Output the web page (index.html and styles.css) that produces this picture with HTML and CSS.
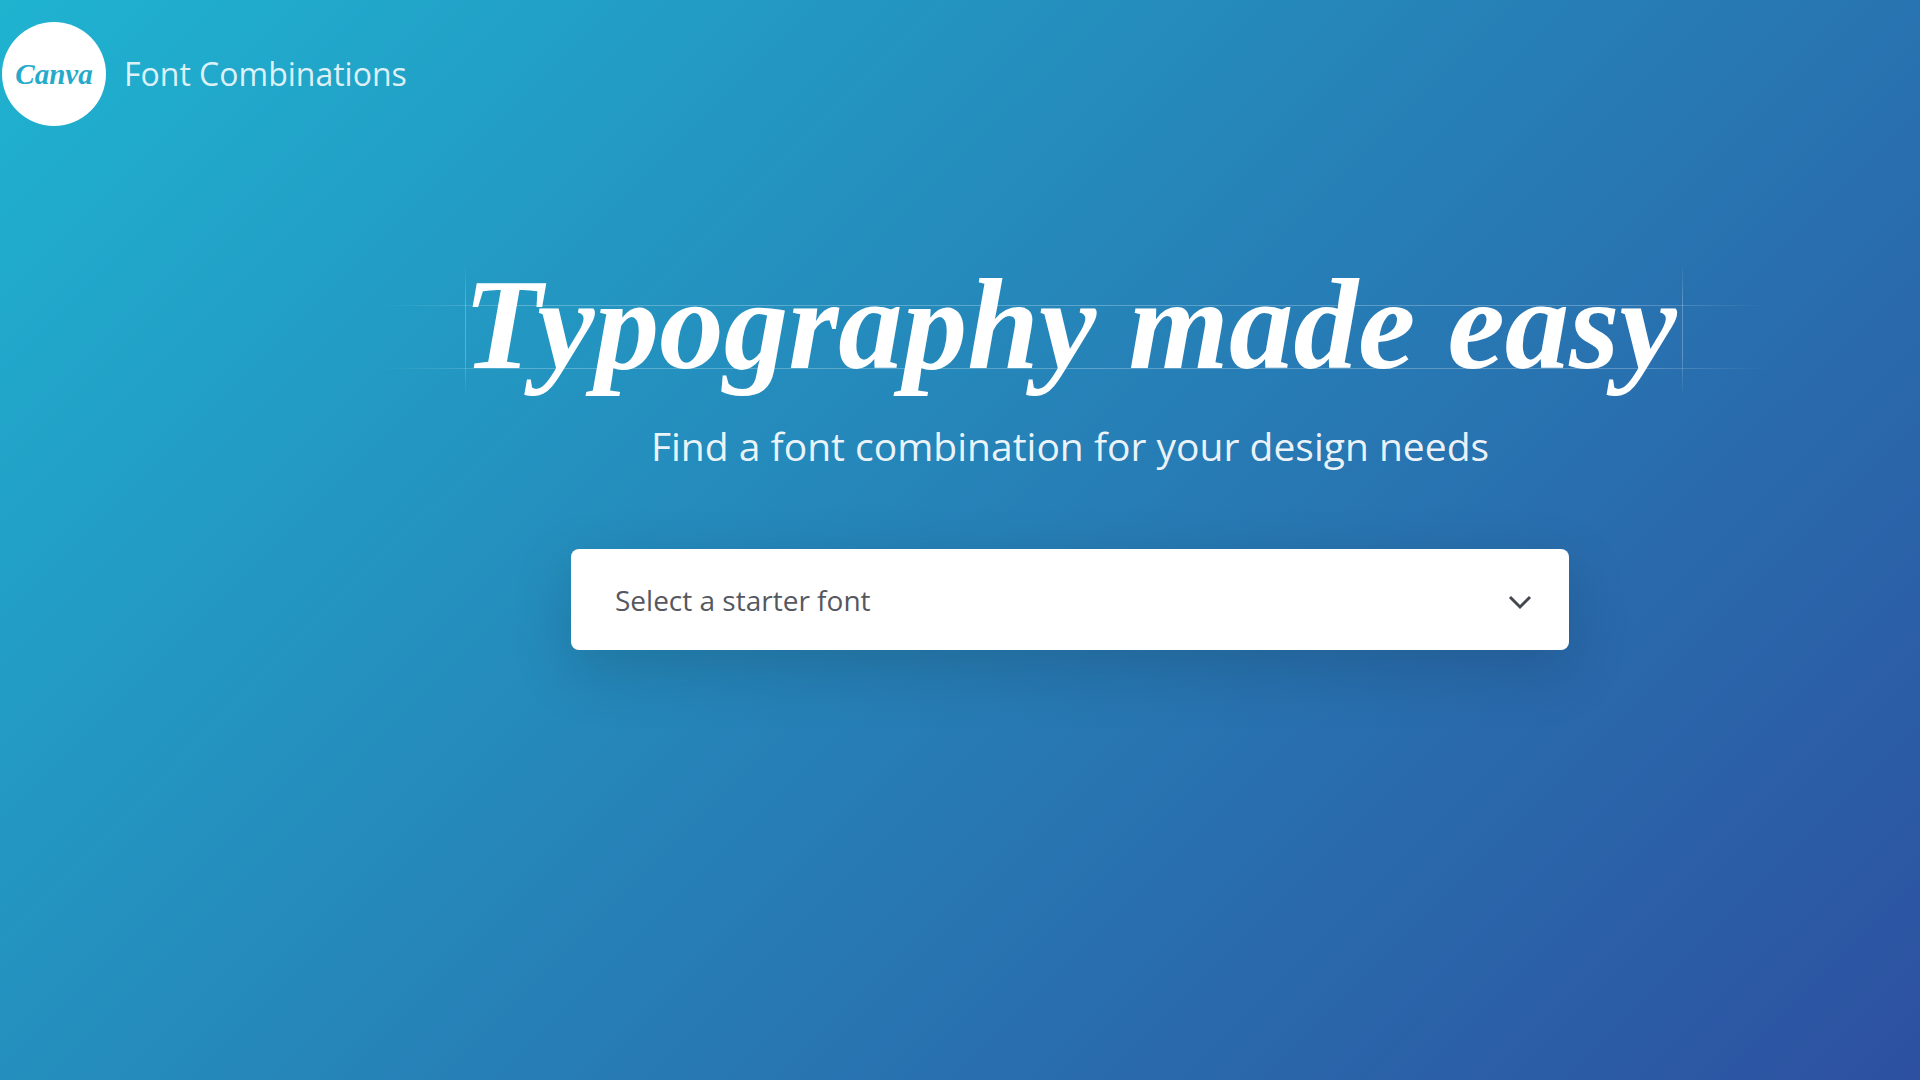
FILE: index.html
```html
<!DOCTYPE html>
<html lang="en">
<head>
<meta charset="utf-8">
<meta name="viewport" content="width=device-width, initial-scale=1">
<title>Font Combinations</title>
<link rel="stylesheet" href="styles.css">
</head>
<body>
<header class="header">
  <a class="logo" href="#">Canva</a>
  <a class="product" href="#">Font Combinations</a>
</header>
<main class="hero">
  <h1 class="title">
    <span class="guide guide-x"></span>
    <span class="guide guide-y"></span>
    Typography made easy
  </h1>
  <label class="subtitle" for="font">Find a font combination for your design needs</label>
  <div class="picker">
    <select class="picker-select" id="font">
      <option>Select a starter font</option>
    </select>
    <svg class="picker-arrow" viewBox="0 0 24 24" aria-hidden="true"><path d="M2 9L12 19L22 9"/></svg>
  </div>
</main>
</body>
</html>
```
FILE: styles.css
```css
* {
  box-sizing: border-box;
}

body {
  margin: 0;
  min-height: 100vh;
  background: linear-gradient(135deg, #1fb3d0 0%, #2681b7 50%, #2d50a0 100%);
  color: #fff;
  font-family: "Open Sans", "Noto Sans", sans-serif;
}

.header {
  display: flex;
  align-items: center;
  gap: 18px;
  padding: 22px 2px 0;
}

.logo {
  display: flex;
  align-items: center;
  justify-content: center;
  width: 104px;
  height: 104px;
  border-radius: 50%;
  background: #fff;
  color: #25aacb;
  font: italic bold 29px/40px "Liberation Serif", serif;
  text-decoration: none;
}

.product {
  color: rgba(255, 255, 255, 0.85);
  font-size: 32px;
  line-height: 44px;
  text-decoration: none;
}

.hero {
  display: flex;
  flex-direction: column;
  align-items: center;
  padding: 138px 0 80px 220px;
}

.title {
  position: relative;
  margin: 0;
  padding: 0 6px 10px;
  font: italic bold 129px/121px "Liberation Serif", serif;
  white-space: nowrap;
}

.guide {
  position: absolute;
  pointer-events: none;
}

.guide-x {
  top: 41px;
  left: -76px;
  right: -84px;
  height: 64px;
  border: solid;
  border-width: 1px 0;
  border-image: linear-gradient(90deg, transparent, rgba(255, 255, 255, 0.25) 10%, rgba(255, 255, 255, 0.25) 90%, transparent) 1;
}

.guide-y {
  inset: 0 0 0 8px;
  border: solid;
  border-width: 0 1px;
  border-image: linear-gradient(transparent, rgba(255, 255, 255, 0.25) 30%, rgba(255, 255, 255, 0.25) 70%, transparent) 1;
}

.subtitle {
  margin-top: 24px;
  color: rgba(255, 255, 255, 0.92);
  font-size: 39px;
  line-height: 54px;
}

.picker {
  display: grid;
  align-items: center;
  width: 100%;
  max-width: 998px;
  margin-top: 76px;
}

.picker-select,
.picker-arrow {
  grid-area: 1 / 1;
}

.picker-select {
  appearance: none;
  width: 100%;
  height: 101px;
  padding: 0 100px 0 44px;
  border: 0;
  border-radius: 8px;
  background: #fff;
  box-shadow: 0 20px 60px rgba(14, 19, 24, 0.17);
  color: #55585f;
  font: 28px/40px "Open Sans", "Noto Sans", sans-serif;
}

.picker-arrow {
  justify-self: end;
  width: 24px;
  height: 24px;
  margin-right: 37px;
  fill: none;
  stroke: #45484f;
  stroke-width: 3;
  pointer-events: none;
}
```
